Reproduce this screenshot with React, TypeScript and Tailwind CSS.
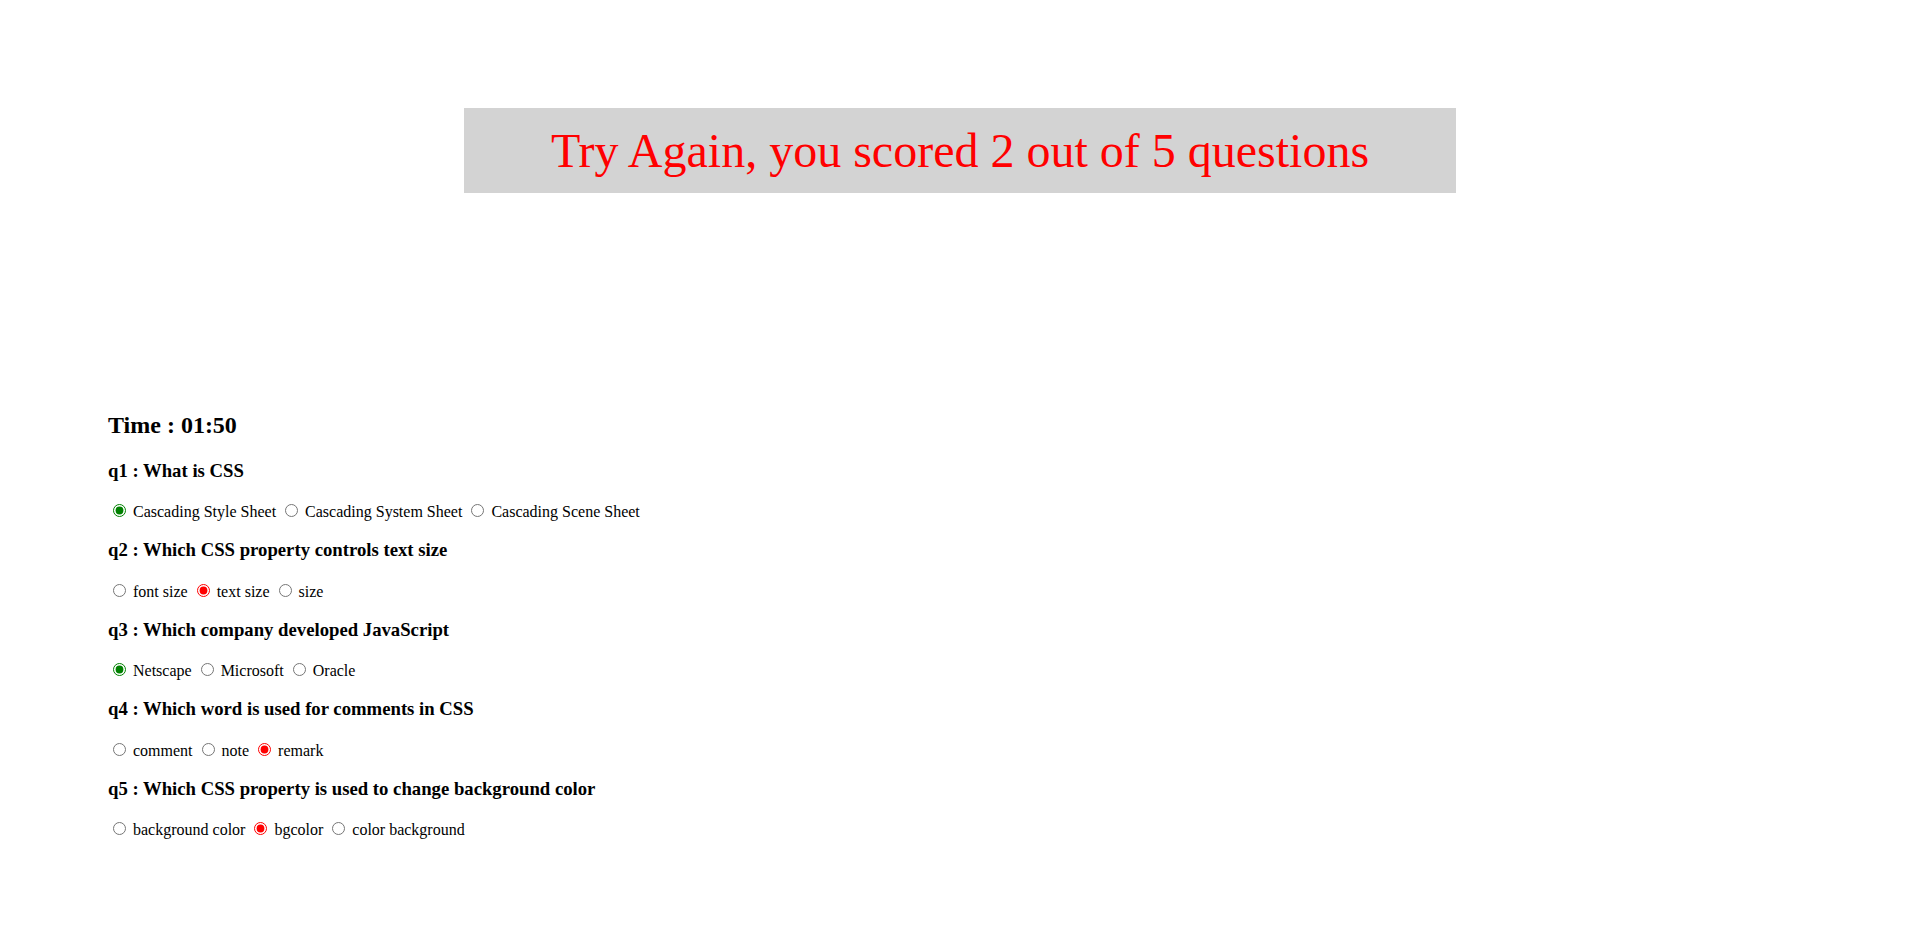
const questions = [
  {
    id: "q1",
    title: "What is CSS",
    options: ["Cascading Style Sheet", "Cascading System Sheet", "Cascading Scene Sheet"],
    picked: 0,
    correct: true,
  },
  {
    id: "q2",
    title: "Which CSS property controls text size",
    options: ["font size", "text size", "size"],
    picked: 1,
    correct: false,
  },
  {
    id: "q3",
    title: "Which company developed JavaScript",
    options: ["Netscape", "Microsoft", "Oracle"],
    picked: 0,
    correct: true,
  },
  {
    id: "q4",
    title: "Which word is used for comments in CSS",
    options: ["comment", "note", "remark"],
    picked: 2,
    correct: false,
  },
  {
    id: "q5",
    title: "Which CSS property is used to change background color",
    options: ["background color", "bgcolor", "color background"],
    picked: 1,
    correct: false,
  },
]

export default function App() {
  return (
    <div className="min-h-[946px] bg-white text-black font-['Liberation_Serif','Times_New_Roman',serif]">
      <div className="pt-[108px]">
        <div className="mx-auto w-[992px] bg-[#d3d3d3] px-4 py-[15px] text-center text-[48px] leading-[1.149] text-[#ff0000]">
          Try Again, you scored 2 out of 5 questions
        </div>
      </div>

      <div className="pl-[108px] pt-[219px]">
        <h2 className="mb-[19.92px] text-[24px] font-bold leading-[1.149]">Time : 01:50</h2>
        {questions.map((q) => (
          <div key={q.id}>
            <h3 className="mt-[17.2px] mb-[20.3px] text-[18.72px] font-bold leading-[1.149]">
              {q.id} : {q.title}
            </h3>
            <p className="my-4 text-[16px] leading-[19.5px]">
              {q.options.map((opt, i) => (
                <span key={opt}>
                  <input
                    type="radio"
                    name={q.id}
                    checked={i === q.picked}
                    readOnly
                    className={
                      "mt-[3px] mr-[3px] ml-[5px] " +
                      (q.correct ? "accent-[#008000]" : "accent-[#ff0000]")
                    }
                  />{" "}
                  {opt}{" "}
                </span>
              ))}
            </p>
          </div>
        ))}
      </div>
    </div>
  )
}
